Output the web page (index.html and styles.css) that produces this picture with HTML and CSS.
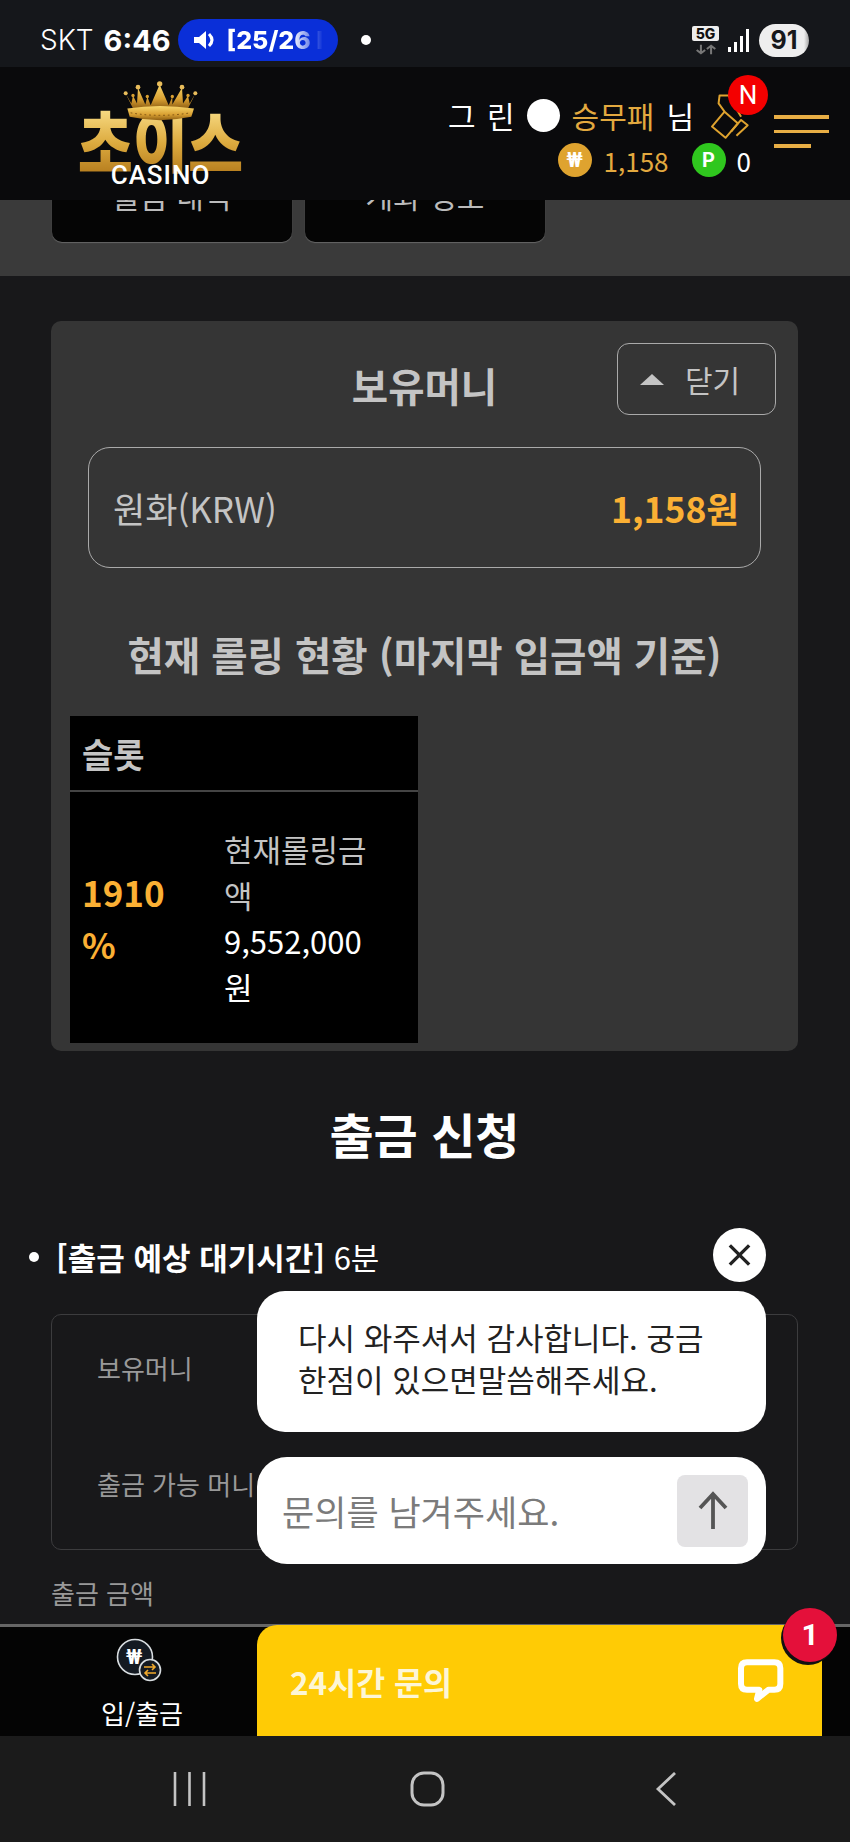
FILE: index.html
```html
<!DOCTYPE html>
<html lang="ko">
<head>
    <meta charset="UTF-8">
    <meta name="viewport" content="width=device-width, initial-scale=1.0">
    <title>초이스 카지노 - 출금 신청</title>
    <link rel="stylesheet" href="styles.css">
</head>
<body>

<div class="status-bar">
    <span class="carrier">SKT</span>
    <span class="clock">6:46</span>
    <span class="media-pill">
        <svg class="speaker" viewBox="0 0 22 22">
            <path d="M0 8h5l7-6v18l-7-6H0z" fill="#fff"/>
            <path d="M15 5q6 6 0 12" fill="none" stroke="#fff" stroke-width="3"/>
        </svg>
        <span class="media-text">[25/26 l</span>
    </span>
    <span class="status-dot"></span>
    <div class="status-right">
        <div class="net">
            <span class="net-badge">5G</span>
            <svg class="net-arrows" viewBox="0 0 26 11">
                <path d="M7 0v10M2 6l5 4 5-4M19 11V1M14 5l5-4 5 4" fill="none" stroke="#777" stroke-width="2.4"/>
            </svg>
        </div>
        <svg class="signal" viewBox="0 0 22 23">
            <rect x="0" y="18" width="3" height="5" fill="#fff"/>
            <rect x="6" y="13" width="3" height="10" fill="#fff"/>
            <rect x="12" y="7" width="3" height="16" fill="#fff"/>
            <rect x="18" y="0" width="3" height="23" fill="#fff"/>
        </svg>
        <span class="battery">91</span>
    </div>
</div>

<header class="site-header">
    <div class="logo">
        <svg class="crown" viewBox="145 15 228 125">
            <defs>
                <linearGradient id="gold" x1="0" y1="0" x2="0" y2="1">
                    <stop offset="0" stop-color="#f8d66a"/>
                    <stop offset="0.6" stop-color="#d9a032"/>
                    <stop offset="1" stop-color="#8f5f14"/>
                </linearGradient>
            </defs>
            <path d="M153 55L175 100H340L362 55L345 85L340 62L325 85L322 38L293 88L293 65L282 90L255 28L228 90L218 65L212 88L190 38L187 85L175 62L170 85Z" fill="url(#gold)"/>
            <path d="M158 100Q255 85 358 100L350 125Q255 145 165 125Z" fill="url(#gold)"/>
            <path d="M168 113Q255 128 348 113" fill="none" stroke="#7a4f10" stroke-width="3" stroke-dasharray="5 9"/>
            <circle cx="255" cy="26" r="8" fill="#e9bd5b"/>
            <circle cx="190" cy="36" r="7" fill="#e9bd5b"/>
            <circle cx="322" cy="36" r="7" fill="#e9bd5b"/>
            <circle cx="153" cy="54" r="6" fill="#e9bd5b"/>
            <circle cx="362" cy="54" r="6" fill="#e9bd5b"/>
            <circle cx="175" cy="61" r="5" fill="#d9a032"/>
            <circle cx="340" cy="61" r="5" fill="#d9a032"/>
            <circle cx="218" cy="64" r="5" fill="#d9a032"/>
            <circle cx="293" cy="64" r="5" fill="#d9a032"/>
        </svg>
        <span class="logo-name">초이스</span>
        <span class="logo-sub">CASINO</span>
    </div>

    <div class="user-menu">
        <div class="user-info">
            <div class="user-row">
                <span class="user-grade">그 린</span>
                <span class="grade-dot"></span>
                <span class="user-nick">승무패</span>
                <span class="user-suffix">님</span>
                <div class="notice">
                    <svg class="notice-icon" viewBox="50 60 130 150">
                        <path d="M62 170L100 125L140 160L103 204Z" fill="none" stroke="#dfa32f" stroke-width="6" stroke-linejoin="round"/>
                        <path d="M120 185L150 150L170 166L136 198" fill="none" stroke="#dfa32f" stroke-width="6" stroke-linejoin="round"/>
                        <path d="M100 125L82 100L85 76H112L150 140" fill="none" stroke="#dfa32f" stroke-width="6" stroke-linejoin="round"/>
                    </svg>
                    <span class="notice-badge">N</span>
                </div>
            </div>
            <div class="money-row">
                <span class="coin coin-won">₩</span>
                <span class="money">1,158</span>
                <span class="coin coin-point">P</span>
                <span class="point">0</span>
            </div>
        </div>
        <div class="hamburger">
            <span></span>
            <span></span>
            <span class="short"></span>
        </div>
    </div>
</header>

<div class="tab-strip">
    <div class="tab">출금 내역</div>
    <div class="tab">계좌 정보</div>
</div>

<main class="content">
    <section class="panel">
        <div class="panel-head">
            <h2 class="panel-title">보유머니</h2>
            <button class="close-btn"><span class="tri"></span>닫기</button>
        </div>

        <div class="balance">
            <span>원화(KRW)</span>
            <strong>1,158원</strong>
        </div>

        <h3 class="rolling-title">현재 롤링 현황 (마지막 입금액 기준)</h3>

        <table class="rolling">
            <colgroup>
                <col class="col-percent">
                <col class="col-amount">
            </colgroup>
            <thead>
                <tr><th colspan="2">슬롯</th></tr>
            </thead>
            <tbody>
                <tr>
                    <td class="percent">1910 %</td>
                    <td class="amount">
                        <div class="amount-label">현재롤링금액</div>
                        <div>9,552,000 원</div>
                    </td>
                </tr>
            </tbody>
        </table>
    </section>

    <h1 class="page-title">출금 신청</h1>

    <ul class="notes">
        <li><span><b>[출금 예상 대기시간]</b> 6분</span></li>
    </ul>

    <div class="summary">
        <div class="summary-row">보유머니</div>
        <div class="summary-row">출금 가능 머니</div>
    </div>

    <label class="field-label">출금 금액</label>
</main>

<div class="chat-popup">
    <button class="chat-close">
        <svg viewBox="0 0 24 24"><path d="M4 4L20 20M20 4L4 20" stroke="#222" stroke-width="2.8" fill="none"/></svg>
    </button>
    <div class="chat-bubble">다시 와주셔서 감사합니다. 궁금<br>한점이 있으면말씀해주세요.</div>
    <div class="chat-input">
        <span class="chat-placeholder">문의를 남겨주세요.</span>
        <span class="chat-send">
            <svg viewBox="0 0 32 40"><path d="M16 38V3M3 17L16 3L29 17" stroke="#555" stroke-width="3.8" fill="none"/></svg>
        </span>
    </div>
</div>

<div class="dock">
    <nav class="tabbar">
        <a class="tabbar-item">
            <svg class="exchange-icon" viewBox="0 0 90 70">
                <circle cx="38" cy="30" r="17.5" fill="#141a22" stroke="#d8dde0" stroke-width="1.6"/>
                <text x="37" y="37" class="won-glyph">₩</text>
                <circle cx="53" cy="43" r="10.5" fill="#141a22" stroke="#d8dde0" stroke-width="1.6"/>
                <path d="M47 40H58M55 37L58 40L55 43M59 46H48M51 43L48 46L51 49" stroke="#f0a92c" stroke-width="1.6" fill="none"/>
            </svg>
            <span>입/출금</span>
        </a>
        <div class="launcher">
            <span class="launcher-text">24시간 문의</span>
            <svg class="launcher-icon" viewBox="55 175 150 140">
                <path d="M88 190H170Q188 190 188 208V255Q188 273 170 273H152L118 300L125 273H88Q70 273 70 255V208Q70 190 88 190Z" fill="none" stroke="#fff" stroke-width="18" stroke-linejoin="round"/>
            </svg>
            <span class="launcher-badge">1</span>
        </div>
    </nav>
    <div class="sys-nav">
        <svg class="sys-recent" viewBox="0 0 33 34">
            <path d="M2 0V34M16.500 0V34M31 0V34" stroke="#c4c4c4" stroke-width="2.6"/>
        </svg>
        <svg class="sys-home" viewBox="0 0 35 36">
            <rect x="2" y="2" width="31" height="32" rx="12" fill="none" stroke="#c4c4c4" stroke-width="3"/>
        </svg>
        <svg class="sys-back" viewBox="0 0 22 34">
            <path d="M20 1L3 17L20 33" fill="none" stroke="#c4c4c4" stroke-width="2.8"/>
        </svg>
    </div>
</div>

</body>
</html>
```

FILE: styles.css
```css
* {
    box-sizing: border-box;
}

body {
    margin: 0;
    width: 850px;
    height: 1842px;
    overflow: hidden;
    position: relative;
    background-color: #18181a;
    color: #ffffff;
    font-family: "Noto Sans CJK KR", "Noto Sans", sans-serif;
}

/* phone status bar */
.status-bar {
    height: 67px;
    background-color: #15171b;
    display: flex;
    align-items: center;
    padding: 13px 41px 0 40px;
    font-family: Inter, "Noto Sans", sans-serif;
}

.carrier {
    font-size: 28px;
    font-weight: 300;
}

.clock {
    font-size: 29px;
    font-weight: 700;
    margin-left: 10px;
}

.media-pill {
    width: 160px;
    height: 42px;
    margin-left: 7px;
    border-radius: 21px;
    background-color: #0a2fd8;
    display: flex;
    align-items: center;
    padding-left: 16px;
}

.speaker {
    width: 22px;
    height: 22px;
}

.media-text {
    margin-left: 11px;
    font-size: 25px;
    font-weight: 800;
    white-space: nowrap;
    background: linear-gradient(90deg, #fff 68%, #0a2fd8 100%);
    -webkit-background-clip: text;
    background-clip: text;
    color: transparent;
}

.status-dot {
    width: 10px;
    height: 10px;
    margin-left: 23px;
    border-radius: 50%;
    background-color: #fff;
}

.status-right {
    margin-left: auto;
    display: flex;
    align-items: center;
}

.net {
    width: 27px;
    display: flex;
    flex-direction: column;
    align-items: center;
    margin-right: 9px;
}

.net-badge {
    width: 27px;
    height: 15px;
    background-color: #eee;
    color: #111;
    font-size: 14px;
    font-weight: 800;
    line-height: 15px;
    text-align: center;
    border-radius: 2px;
}

.net-arrows {
    width: 22px;
    height: 11px;
    margin-top: 3px;
}

.signal {
    width: 22px;
    height: 23px;
    margin-right: 9px;
}

.battery {
    width: 50px;
    height: 33px;
    border-radius: 17px;
    background: linear-gradient(90deg, #eee 90%, #a5a5a5 100%);
    color: #17181b;
    font-size: 25px;
    font-weight: 700;
    line-height: 33px;
    text-align: center;
}

/* site header */
.site-header {
    height: 133px;
    background-color: #0a0a0c;
    display: flex;
    justify-content: space-between;
    padding: 0 21px 0 80px;
    position: relative;
    z-index: 2;
}

.logo {
    width: 161px;
    display: flex;
    flex-direction: column;
    align-items: center;
    padding-top: 13px;
}

.crown {
    width: 76px;
    height: 42px;
    position: relative;
    z-index: 1;
}

.logo-name {
    margin-top: -10px;
    font-size: 60px;
    font-weight: 900;
    line-height: 56px;
    white-space: nowrap;
    background: linear-gradient(180deg, #fbe08a 0%, #dcaa3e 55%, #b67d1e 100%);
    -webkit-background-clip: text;
    background-clip: text;
    color: transparent;
    transform: scaleY(1.2);
}

.logo-sub {
    margin-top: -5px;
    font-family: Roboto, "Noto Sans", sans-serif;
    font-size: 26px;
    font-weight: 500;
    line-height: 24px;
    letter-spacing: 1px;
    position: relative;
}

.user-menu {
    display: flex;
}

.user-info {
    display: flex;
    flex-direction: column;
    align-items: flex-end;
    padding-top: 23px;
}

.user-row {
    display: flex;
    align-items: center;
    gap: 12px;
    font-size: 30px;
    height: 50px;
}

.user-grade {
    word-spacing: 3px;
}

.grade-dot {
    width: 33px;
    height: 33px;
    border-radius: 50%;
    background-color: #fff;
}

.user-nick {
    color: #e3a93f;
}

.notice {
    position: relative;
    width: 43px;
    height: 50px;
    margin-left: 2px;
}

.notice-icon {
    width: 43px;
    height: 50px;
    display: block;
}

.notice-badge {
    position: absolute;
    left: 20px;
    top: -15px;
    width: 40px;
    height: 40px;
    border-radius: 50%;
    background-color: #f40000;
    color: #fff;
    font-family: Roboto, sans-serif;
    font-size: 26px;
    line-height: 40px;
    text-align: center;
}

.money-row {
    display: flex;
    align-items: center;
    height: 34px;
    margin-top: 3px;
    font-size: 26px;
}

.coin {
    width: 34px;
    height: 34px;
    border-radius: 50%;
    color: #fff;
    font-family: Roboto, sans-serif;
    font-size: 20px;
    font-weight: 700;
    line-height: 34px;
    text-align: center;
}

.coin-won {
    background-color: #dfa32f;
}

.coin-point {
    background-color: #2fc71e;
    margin-left: 23px;
}

.money {
    color: #e3a93f;
    margin-left: 12px;
}

.point {
    margin-left: 11px;
}

.hamburger {
    width: 55px;
    margin-left: 23px;
    padding-top: 48px;
    display: flex;
    flex-direction: column;
    gap: 11px;
}

.hamburger span {
    height: 3.500px;
    background-color: #e8ae45;
}

.hamburger .short {
    width: 37px;
}

/* tabs that scrolled under the header */
.tab-strip {
    height: 76px;
    background-color: #3a3a3a;
    overflow: hidden;
    display: flex;
    align-items: flex-end;
    gap: 13px;
    padding: 0 0 34px 52px;
}

.tab {
    width: 240px;
    height: 94px;
    flex-shrink: 0;
    background-color: #050505;
    border-radius: 0 0 10px 10px;
    box-shadow: 0 1px 1px #666;
    color: #bbb;
    font-size: 30px;
    line-height: 94px;
    text-align: center;
}

/* page content */
.content {
    padding: 45px 52px 0 51px;
}

.panel {
    background-color: #353535;
    border-radius: 10px;
    padding: 22px 19px 8px;
    color: #c4c4c4;
}

.panel-head {
    display: grid;
    grid-template-columns: 1fr auto 1fr;
    align-items: center;
    margin-right: 3px;
}

.panel-title {
    grid-column: 2;
    margin: 12px 0 0 3px;
    font-size: 39.500px;
    font-weight: 700;
    line-height: 50px;
}

.close-btn {
    grid-column: 3;
    justify-self: end;
    width: 159px;
    height: 72px;
    border: 1.500px solid #aaa;
    border-radius: 12px;
    background: none;
    color: #c4c4c4;
    font-family: inherit;
    font-size: 30px;
    display: flex;
    align-items: center;
    padding: 0 0 0 22px;
}

.tri {
    width: 0;
    height: 0;
    border-left: 12px solid transparent;
    border-right: 12px solid transparent;
    border-bottom: 11px solid #c4c4c4;
    margin-right: 21px;
}

.balance {
    height: 121px;
    margin: 32px 18px 0;
    padding: 0 21px 0 24px;
    border: 1.500px solid #aaa;
    border-radius: 22px;
    display: flex;
    align-items: center;
    justify-content: space-between;
    font-size: 35px;
}

.balance strong {
    color: #fbb034;
    font-size: 35.500px;
    font-weight: 700;
}

.rolling-title {
    margin: 61px 0 37px;
    font-size: 39.500px;
    font-weight: 700;
    line-height: 50px;
    text-align: center;
}

.rolling {
    width: 348px;
    background-color: #000;
    border-collapse: collapse;
    table-layout: fixed;
}

.col-percent {
    width: 142px;
}

.rolling th {
    height: 75px;
    padding: 0 12px;
    border-bottom: 2px solid #444;
    font-size: 34px;
    font-weight: 700;
    text-align: left;
}

.rolling td {
    height: 252px;
    vertical-align: middle;
}

.percent {
    padding: 0 30px 0 12px;
    color: #fbb034;
    font-size: 35px;
    font-weight: 700;
    line-height: 52px;
}

.amount {
    padding: 0 36px 0 12px;
    color: #fff;
    font-size: 31px;
    line-height: 46px;
}

.amount-label {
    color: #c4c4c4;
}

.page-title {
    margin: 52px 0 0;
    font-size: 48px;
    font-weight: 700;
    line-height: 60px;
    text-align: center;
}

.notes {
    margin: 72px 0 0 -51px;
    padding: 0 0 0 29px;
    list-style: none;
    font-size: 31px;
    line-height: 44px;
}

.notes li {
    display: flex;
    align-items: center;
}

.notes li::before {
    content: "";
    width: 10px;
    height: 10px;
    margin-right: 17px;
    border-radius: 50%;
    background-color: #fff;
}

.notes b {
    font-weight: 700;
}

.summary {
    height: 236px;
    margin-top: 35px;
    padding: 31px 45px;
    border: 1.500px solid #3c3c3e;
    border-radius: 10px;
    color: #999;
    font-size: 26px;
}

.summary-row {
    height: 116px;
    line-height: 44px;
}

.field-label {
    display: block;
    margin-top: 23px;
    color: #999;
    font-size: 26px;
    line-height: 40px;
}

/* chat widget floats over the page */
.chat-popup {
    position: absolute;
    left: 257px;
    top: 1228px;
    width: 509px;
    display: flex;
    flex-direction: column;
    align-items: flex-end;
    z-index: 3;
}

.chat-close {
    width: 53px;
    height: 54px;
    border: none;
    border-radius: 50%;
    background-color: #fff;
    padding: 12px;
    margin-bottom: 9px;
}

.chat-close svg {
    display: block;
    width: 100%;
    height: 100%;
}

.chat-bubble {
    width: 100%;
    height: 141px;
    padding: 25px 20px 0 41px;
    border-radius: 28px;
    background-color: #fff;
    color: #222;
    font-size: 31px;
    line-height: 42px;
    white-space: nowrap;
}

.chat-input {
    width: 100%;
    height: 107px;
    margin-top: 25px;
    padding: 0 18px 0 25px;
    border-radius: 30px;
    background-color: #fff;
    display: flex;
    align-items: center;
    justify-content: space-between;
}

.chat-placeholder {
    color: #7b7b7b;
    font-size: 35px;
}

.chat-send {
    width: 71px;
    height: 72px;
    border-radius: 8px;
    background-color: #e3e2e4;
    display: flex;
    align-items: center;
    justify-content: center;
}

.chat-send svg {
    width: 32px;
    height: 40px;
}

/* bottom bars */
.dock {
    position: absolute;
    left: 0;
    right: 0;
    bottom: 0;
    z-index: 2;
}

.tabbar {
    height: 112px;
    background-color: #040404;
    border-top: 3px solid #666;
    display: flex;
}

.tabbar-item {
    width: 257px;
    padding-left: 27px;
    display: flex;
    flex-direction: column;
    align-items: center;
    font-size: 26px;
    line-height: 36px;
}

.exchange-icon {
    width: 90px;
    height: 70px;
    flex-shrink: 0;
    margin-bottom: -2px;
}

.won-glyph {
    fill: #fff;
    font-family: Roboto, sans-serif;
    font-size: 20px;
    font-weight: 700;
    text-anchor: middle;
}

.launcher {
    width: 565px;
    margin-top: -2px;
    background-color: #ffcb05;
    border-radius: 20px 0 0 0;
    display: flex;
    align-items: center;
    justify-content: space-between;
    padding: 0 36px 0 33px;
    position: relative;
}

.launcher-text {
    font-size: 31.500px;
    font-weight: 700;
    color: #fdf6d6;
}

.launcher-icon {
    width: 50px;
    height: 47px;
}

.launcher-badge {
    position: absolute;
    right: -15px;
    top: -17px;
    width: 54px;
    height: 54px;
    border-radius: 50%;
    background-color: #e4103a;
    box-shadow: -2px 3px 0 #111;
    color: #fff;
    font-family: Roboto, sans-serif;
    font-size: 30px;
    font-weight: 700;
    line-height: 54px;
    text-align: center;
}

.sys-nav {
    height: 106px;
    background-color: #1b1b1b;
    display: flex;
    align-items: center;
    padding: 0 0 0 173px;
}

.sys-recent {
    width: 33px;
    height: 34px;
}

.sys-home {
    width: 35px;
    height: 36px;
    margin-left: 204px;
}

.sys-back {
    width: 22px;
    height: 34px;
    margin-left: 210px;
}
```
